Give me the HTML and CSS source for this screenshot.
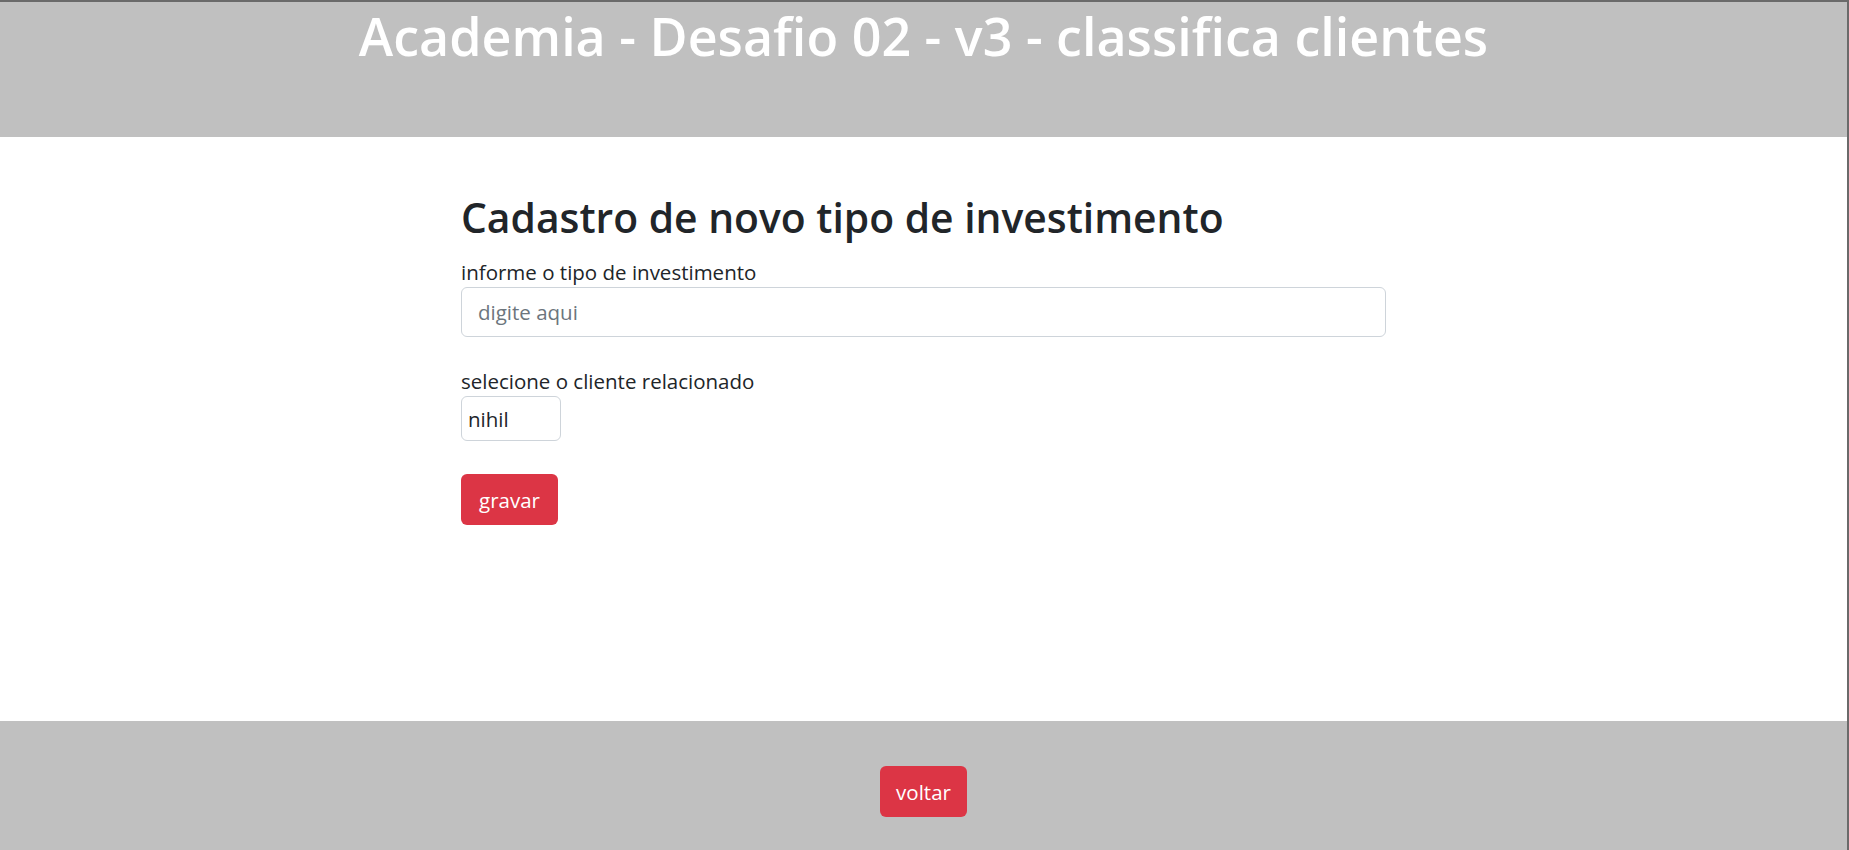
FILE: index.html
```html
<!DOCTYPE html>
<html lang="pt-br">
<head>
<meta charset="utf-8">
<title>Academia - Desafio 02</title>
<link rel="stylesheet" href="styles.css">
</head>
<body>
<div class="page">
  <header class="topbar">
    <h1 class="topbar-title">Academia - Desafio 02 - v3 - classifica clientes</h1>
  </header>
  <main class="main">
    <div class="content">
      <h2 class="form-title">Cadastro de novo tipo de investimento</h2>
      <form class="form">
        <div class="field">
          <label class="field-label" for="tipo">informe o tipo de investimento</label>
          <input class="text-input" id="tipo" type="text" placeholder="digite aqui">
        </div>
        <div class="field field-select">
          <label class="field-label" for="cliente">selecione o cliente relacionado</label>
          <select class="select-input" id="cliente">
            <option>nihil</option>
          </select>
        </div>
        <button type="button" class="btn btn-danger btn-save">gravar</button>
      </form>
    </div>
  </main>
  <footer class="footer">
    <button type="button" class="btn btn-danger">voltar</button>
  </footer>
</div>
</body>
</html>
```

FILE: styles.css
```css
* { box-sizing: border-box; }
html, body { margin: 0; padding: 0; height: 100%; }
body {
  font-family: "Open Sans", "Noto Sans", sans-serif;
  color: #212529;
  background: #fff;
}
.page {
  display: flex;
  flex-direction: column;
  height: 850px;
  border-top: 2px solid #6a6a6a;
  border-right: 2px solid #6a6a6a;
}
.topbar {
  background: #c0c0c0;
  height: 135px;
  flex: none;
}
.topbar-title {
  margin: 0;
  padding-top: 4px;
  text-align: center;
  color: #fff;
  font-weight: 600;
  font-size: 52px;
  line-height: 60px;
}
.main {
  flex: 1;
}
.content {
  width: 925px;
  margin: 0 auto;
  padding-top: 56px;
}
.form-title {
  margin: 0 0 18px;
  font-weight: 600;
  font-size: 40.8px;
  line-height: 48px;
}
.field {
  display: flex;
  flex-direction: column;
  align-items: flex-start;
  margin-bottom: 31px;
}
.field-label {
  font-size: 20.5px;
  line-height: 26px;
  margin-bottom: 2px;
}
.text-input {
  width: 100%;
  height: 50px;
  border: 1px solid #ced4da;
  border-radius: 6px;
  padding: 0 16px;
  font-family: inherit;
  font-size: 20.5px;
  color: #495057;
}
.text-input::placeholder { color: #6c757d; }
.select-input {
  -webkit-appearance: none;
  appearance: none;
  width: 100px;
  height: 45px;
  border: 1px solid #ced4da;
  border-radius: 6px;
  padding: 0 6px;
  background: #fff;
  font-family: inherit;
  font-size: 20.5px;
  color: #212529;
}
.field-select { margin-bottom: 33px; }
.btn {
  height: 51px;
  padding: 0 16px;
  border: none;
  border-radius: 6px;
  font-family: inherit;
  font-size: 20.5px;
  color: #fff;
}
.btn-save { padding: 0 18px; }
.btn-danger { background: #dc3545; }
.footer {
  background: #c0c0c0;
  height: 129px;
  flex: none;
  display: flex;
  justify-content: center;
  align-items: flex-start;
  padding-top: 45px;
}
```
